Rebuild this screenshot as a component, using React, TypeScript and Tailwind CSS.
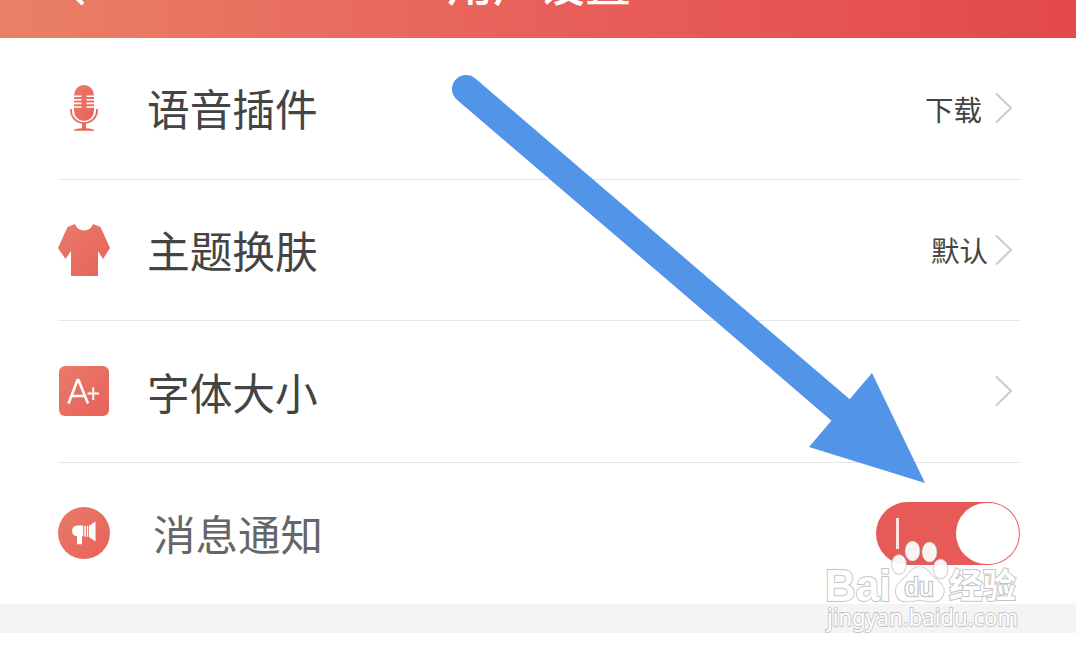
import type { ReactNode } from 'react'

interface SettingRowProps {
  icon: ReactNode
  label: string
  value?: string
  valueClass?: string
}

function IconGradient({ id }: { id: string }) {
  return (
    <defs>
      <linearGradient id={id} x1="0" y1="0" x2="1" y2="1">
        <stop offset="0" stopColor="#e87b69" />
        <stop offset="1" stopColor="#e8625b" />
      </linearGradient>
    </defs>
  )
}

function MicIcon() {
  return (
    <svg viewBox="0 0 52 52" className="size-[52px]">
      <IconGradient id="mic" />
      <g fill="url(#mic)">
        <path d="M16 13.500a10 10.500 0 0 1 20 0v15a10 10.500 0 0 1-20 0z" />
        <path d="M12 27v1.500a14 13.500 0 0 0 12 13.300V46c-1 .8-8.500.3-8.500 2.800h21c0-2.500-7.500-2-8.500-2.800v-4.200A14 13.500 0 0 0 40 28.500V27h-2v1.500a12 11.500 0 0 1-24 0V27z" />
      </g>
      <g stroke="#fff" strokeWidth="1.600">
        <path d="M15 14.200h8.500M15 17.800h8.500M15 21.400h8.500M15 25h8.500" />
        <path d="M28.500 14.200H37M28.500 17.800H37M28.500 21.400H37M28.500 25H37" />
      </g>
    </svg>
  )
}

function ShirtIcon() {
  return (
    <svg viewBox="0 0 52 52" className="size-[52px]">
      <IconGradient id="shirt" />
      <path
        d="M17 0c2.500 8.500 15.500 8.500 18 0l7.500 3L52 24l-7 11-5-8V52H13V27l-5.500 8L0 24 9.500 3z"
        fill="url(#shirt)"
      />
    </svg>
  )
}

function FontSizeIcon() {
  return (
    <svg viewBox="0 0 52 52" className="size-[52px]">
      <IconGradient id="font" />
      <rect x="1" y="1" width="50" height="50" rx="6" fill="url(#font)" />
      <g fill="none" stroke="#fff" strokeLinejoin="round">
        <path d="M10.500 38.500 19.500 15h1L30 38.500M14 31h13" strokeWidth="2.600" />
        <path d="M29.500 28.500h11.500M35.200 22.500v12.500" strokeWidth="2" />
      </g>
    </svg>
  )
}

function NoticeIcon() {
  return (
    <svg viewBox="0 0 52 52" className="size-[52px]">
      <IconGradient id="notice" />
      <circle cx="26" cy="26" r="26" fill="url(#notice)" />
      <g fill="#fff">
        <path d="M19 18.500h6.200v10.800H24v8h-5v-8c-6.500 0-6.500-10.800 0-10.800z" />
        <path d="M26.300 19h1.600v10.500h-1.600zM28.900 18.800h1.300v11h-1.300zM31 18.800l6.500-4.300v20L31 30z" />
      </g>
    </svg>
  )
}

function Chevron() {
  return (
    <svg viewBox="0 0 18 32" className="h-8 w-[18px]" fill="none" stroke="#cdcdcd" strokeWidth="2.200">
      <path d="M1 1.500 16 16 1 30.500" />
    </svg>
  )
}

function SettingRow({ icon, label, value, valueClass }: SettingRowProps) {
  return (
    <div className="flex h-[141.700px] items-center border-b-[1.500px] border-[#e6e6e6] pb-px">
      {icon}
      <span className="ml-[37px] text-[42.700px] leading-none text-[#444]">{label}</span>
      <div className="mr-[7px] ml-auto flex items-center">
        {value && <span className={`pt-0.5 text-[28.500px] leading-none text-[#444] ${valueClass ?? ''}`}>{value}</span>}
        <Chevron />
      </div>
    </div>
  )
}

function Toggle() {
  return (
    <div className="flex h-[63px] w-36 items-center justify-between rounded-full bg-[#e65a57] pr-px pl-5">
      <span className="h-[31px] w-[2.500px] bg-[#ffe3e1]" />
      <span className="h-[61px] w-[63px] rounded-full bg-white" />
    </div>
  )
}

function Arrow() {
  return (
    <svg viewBox="0 0 1076 656" className="absolute inset-0 h-full w-full">
      <path d="M466 89 843 412" stroke="#5294e8" strokeWidth="28" strokeLinecap="round" />
      <path d="M872 373 925 483 809 447z" fill="#5294e8" />
    </svg>
  )
}

function Watermark() {
  return (
    <svg
      viewBox="0 0 204 110"
      className="absolute top-[536px] left-[820px] h-[110px] w-[204px]"
      fill="#fff"
      stroke="#c4c4c4"
      paintOrder="stroke"
    >
      <text x="5" y="64.500" textLength="66" lengthAdjust="spacingAndGlyphs" fontFamily="Liberation Sans" fontWeight="700" fontSize="45" strokeWidth="2">
        Bai
      </text>
      <g strokeWidth="1.500" fillOpacity=".92">
        <ellipse cx="79" cy="28.500" rx="7" ry="9.500" />
        <ellipse cx="92.500" cy="15" rx="7" ry="9.500" />
        <ellipse cx="109.500" cy="16" rx="7" ry="9.500" />
        <ellipse cx="120.500" cy="33" rx="7" ry="9.500" />
        <path d="M99.500 31c8 0 10 7 15 11 6 5 11 9 9 15.500-2 8-9 9-16 7.500-5-1-10-1-15 0-8 1.500-15 0-16.500-7.500-1.500-7 3-11 8.500-15.500 5-4 7-11 15-11z" />
      </g>
      <text x="84.500" y="60" textLength="29" lengthAdjust="spacingAndGlyphs" fontFamily="Liberation Sans" fontSize="26" strokeWidth="2.500">
        du
      </text>
      <text x="129" y="62" textLength="67" lengthAdjust="spacingAndGlyphs" fontFamily="Noto Sans CJK SC" fontWeight="700" fontSize="34" strokeWidth="2">
        经验
      </text>
      <text x="7" y="90" textLength="191" lengthAdjust="spacingAndGlyphs" fontFamily="Noto Sans" fontWeight="400" fontSize="23" strokeWidth="1.800">
        jingyan.baidu.com
      </text>
    </svg>
  )
}

export default function App() {
  return (
    <div className="relative h-[656px] w-[1076px] overflow-hidden bg-white font-['Noto_Sans_CJK_SC',sans-serif]">
      <header className="relative h-[38px] overflow-hidden bg-linear-to-r from-[#e98066] via-[#e8605a] to-[#e3484c]">
        <svg viewBox="0 0 24 44" className="absolute -top-[38px] left-[60px] h-11 w-6" fill="none" stroke="#fff" strokeWidth="4">
          <path d="M22 2 2 22l21 20" />
        </svg>
        <h1 className="absolute -top-[42px] left-[447px] text-[46px] leading-none font-medium text-white">用户设置</h1>
      </header>

      <main className="pr-14 pl-[58px]">
        <SettingRow icon={<MicIcon />} label="语音插件" value="下载" valueClass="mr-[13px]" />
        <SettingRow icon={<ShirtIcon />} label="主题换肤" value="默认" valueClass="mr-[7px]" />
        <SettingRow icon={<FontSizeIcon />} label="字体大小" />
        <div className="flex h-[141px] items-center pb-px">
          <NoticeIcon />
          <span className="ml-[43px] pt-px text-[42.500px] leading-none text-[#666]">消息通知</span>
          <div className="ml-auto pt-px">
            <Toggle />
          </div>
        </div>
      </main>
      <div className="h-[29px] bg-[#f4f4f4]" />

      <Arrow />
      <Watermark />
    </div>
  )
}
